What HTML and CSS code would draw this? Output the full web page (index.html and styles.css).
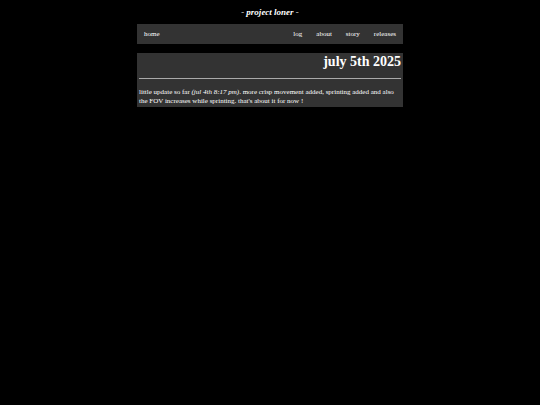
FILE: index.html
```
<!DOCTYPE html>
<html lang="en">
<head>
<meta charset="utf-8">
<title>project loner</title>
<link rel="stylesheet" href="styles.css">
</head>
<body>
<header class="site-title"><h1>- project loner -</h1></header>
<nav class="nav">
<a class="home" href="#home">home</a>
<a href="#log">log</a>
<a href="#about">about</a>
<a href="#story">story</a>
<a href="#releases">releases</a>
</nav>
<main class="post">
<h2>july 5th 2025</h2>
<hr>
<p>little update so far <em>(jul 4th 8:17 pm)</em>. more crisp movement added, sprinting added and also the FOV increases while sprinting. that's about it for now !</p>
</main>
</body>
</html>
```
FILE: styles.css
```
body {
  margin: 0 auto;
  padding: 8px 0;
  width: 100%;
  max-width: 266px;
  background: #000;
  color: #fff;
  font: 7px/9px "Liberation Serif", "Times New Roman", serif;
}

.site-title h1 {
  margin: 0 0 7px;
  font-size: 9px;
  line-height: 9px;
  font-style: italic;
  text-align: center;
}

.nav {
  display: flex;
  background: #333;
}

.nav a {
  padding: 6px 7px 5px;
  color: #fff;
  text-decoration: none;
}

.nav .home {
  margin-right: auto;
}

.post {
  margin-top: 9px;
  padding: 0 2px 1px;
  background: #333;
}

.post h2 {
  margin: 0;
  font-size: 14px;
  line-height: 18px;
  text-align: right;
}

.post hr {
  margin: 7px 0 9px;
  border: 0;
  border-top: 1px solid #aaa;
}

.post p {
  margin: 0;
}
```
